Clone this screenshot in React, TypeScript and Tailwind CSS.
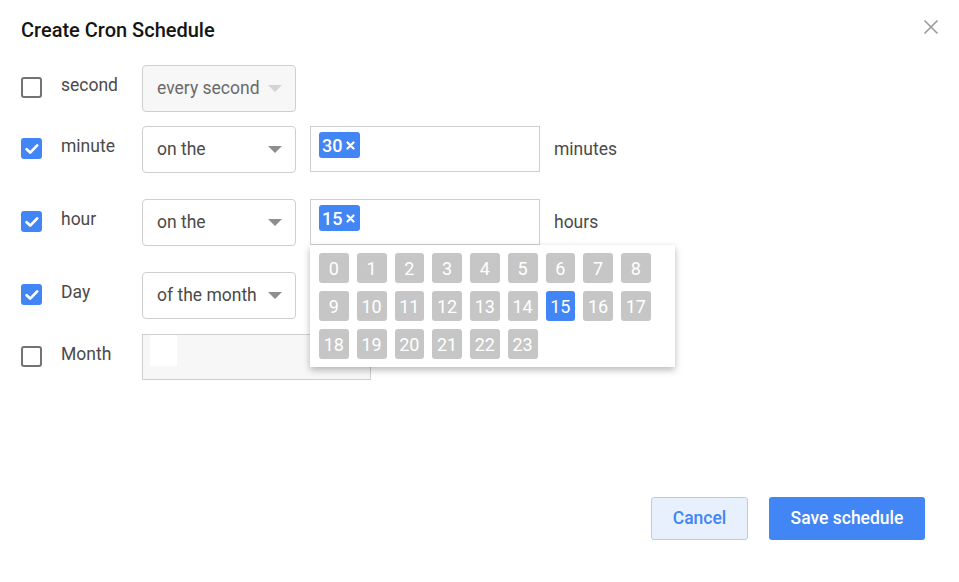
import React from "react";

const font = { fontFamily: "Roboto, 'Liberation Sans', sans-serif" };

function Checkbox({ checked }: { checked: boolean }) {
  if (checked) {
    return (
      <div className="mt-[12px] flex h-[21px] w-[21px] shrink-0 items-center justify-center rounded-[3px] bg-[#4285f4]">
        <svg width="16" height="16" viewBox="0 0 16 16">
          <path d="M2.6 8.2 L6.2 11.6 L13.2 4.4" fill="none" stroke="#fff" strokeWidth="2.7" strokeLinecap="round" strokeLinejoin="round" />
        </svg>
      </div>
    );
  }
  return <div className="mt-[12px] h-[21px] w-[21px] shrink-0 rounded-[3px] border-2 border-[#737373]" />;
}

function Select({ value, disabled }: { value: string; disabled?: boolean }) {
  return (
    <div
      className={
        "flex h-[47px] w-[154px] shrink-0 items-center justify-between rounded-[4px] border border-[#cfcfcf] pl-[14px] pr-[13px] text-[17.5px] " +
        (disabled ? "bg-[#f7f7f7] text-[#6a6a6a]" : "bg-white text-[#4a4a4a]")
      }
    >
      <span>{value}</span>
      <svg width="14" height="7" viewBox="0 0 14 7">
        <path d="M0 0 L14 0 L7 7 Z" fill={disabled ? "#d4d4d4" : "#8e8e8e"} />
      </svg>
    </div>
  );
}

function TagInput({ tag }: { tag: string }) {
  return (
    <div className="ml-[14px] h-[46px] w-[230px] shrink-0 border border-[#cfcfcf] bg-white pl-[8px] pt-[5px]">
      <span className="inline-flex h-[26px] items-center gap-[4px] rounded-[3px] bg-[#4285f4] pl-[3px] pr-[5px] text-[18px] font-medium text-white">
        <span>{tag}</span>
        <svg width="9" height="9" viewBox="0 0 9 9">
          <path d="M1.5 1.5 L7.5 7.5 M7.5 1.5 L1.5 7.5" stroke="#fff" strokeWidth="2.2" strokeLinecap="round" />
        </svg>
      </span>
    </div>
  );
}

function Label({ text }: { text: string }) {
  return <div className="ml-[19px] mt-[7px] w-[81px] shrink-0 text-[17.5px] text-[#4a4a4a]">{text}</div>;
}

const hours = Array.from({ length: 24 }, (_, i) => i);

export default function App() {
  return (
    <div className="relative h-[582px] w-[959px] bg-white" style={font}>
      <div className="flex items-start justify-between pl-[21px] pr-[20px] pt-[18px]">
        <h1 className="text-[20px] font-medium leading-[24px] text-[#151515]">Create Cron Schedule</h1>
        <svg width="16" height="16" viewBox="0 0 16 16" className="mt-[1px]">
          <path d="M1.5 1.5 L14.5 14.5 M14.5 1.5 L1.5 14.5" stroke="#9a9a9a" strokeWidth="1.6" />
        </svg>
      </div>

      <div className="flex flex-col pl-[21px] pt-[23px]">
        <div className="flex items-start">
          <Checkbox checked={false} />
          <Label text="second" />
          <Select value="every second" disabled />
        </div>

        <div className="mt-[14px] flex items-start">
          <Checkbox checked />
          <Label text="minute" />
          <Select value="on the" />
          <TagInput tag="30" />
          <div className="ml-[14px] mt-[10px] text-[17.5px] text-[#4a4a4a]">minutes</div>
        </div>

        <div className="mt-[26px] flex items-start">
          <Checkbox checked />
          <Label text="hour" />
          <Select value="on the" />
          <TagInput tag="15" />
          <div className="ml-[14px] mt-[10px] text-[17.5px] text-[#4a4a4a]">hours</div>
        </div>

        <div className="mt-[26px] flex items-start">
          <Checkbox checked />
          <Label text="Day" />
          <Select value="of the month" />
        </div>

        <div className="mt-[15px] flex items-start">
          <Checkbox checked={false} />
          <Label text="Month" />
          <div className="h-[46px] w-[229px] shrink-0 border border-[#cfcfcf] bg-[#f7f7f7] pl-[7px]">
            <div className="h-[31px] w-[27px] bg-white" />
          </div>
        </div>
      </div>

      {/* hour picker dropdown */}
      <div className="absolute left-[310px] top-[245px] w-[365px] bg-white pb-[8px] pl-[9px] pt-[8px] shadow-[0_3px_7px_rgba(0,0,0,0.28)]">
        <div className="grid grid-cols-[repeat(9,29.75px)] gap-[8px]">
          {hours.map((h) => (
            <div
              key={h}
              className={
                "flex h-[30px] items-center justify-center rounded-[3px] text-[18px] text-white " +
                (h === 15 ? "bg-[#4285f4]" : "bg-[#c6c6c6]")
              }
            >
              {h}
            </div>
          ))}
        </div>
      </div>

      <div className="absolute bottom-[42px] right-[34px] flex gap-[21px]">
        <button className="h-[43px] w-[97px] rounded-[3px] border border-[#b3cbf6] bg-[#e8f0fe] text-[17.5px] font-medium text-[#4285f4]">
          Cancel
        </button>
        <button className="h-[43px] w-[156px] rounded-[3px] bg-[#4285f4] text-[17.5px] font-medium text-white">
          Save schedule
        </button>
      </div>
    </div>
  );
}
